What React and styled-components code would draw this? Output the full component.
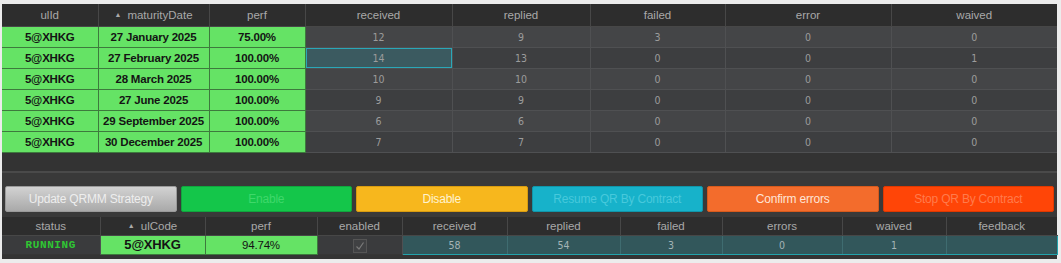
import styled, { createGlobalStyle } from "styled-components";

const GlobalStyle = createGlobalStyle`
  html, body {
    margin: 0;
    padding: 0;
    background: #ececec;
  }
  body {
    font-family: "Liberation Sans", Arial, sans-serif;
  }
`;

const Panel = styled.div`
  margin: 4px 4px 0 2px;
  width: 1055px;
  background: #363636;
  display: flex;
  flex-direction: column;
`;

const Grid = styled.table`
  width: 1055px;
  border-collapse: collapse;
  table-layout: fixed;
  white-space: nowrap;
`;

const Head = styled.th`
  height: ${(p) => p.$h}px;
  padding: 0;
  background: #2d2d2d;
  color: #a9a9a9;
  font-weight: 400;
  font-size: 11.5px;
  text-align: center;
  border-right: 1px solid #474747;
  border-bottom: 1px solid #474747;
  overflow: hidden;
  &:last-child {
    border-right: none;
  }
`;

const Arrow = styled.span`
  font-size: 7px;
  margin-right: 6px;
  vertical-align: 2px;
`;

const Cell = styled.td`
  height: ${(p) => p.$h}px;
  padding: 0;
  text-align: center;
  font-family: "DejaVu Sans Condensed", "Liberation Sans", sans-serif;
  font-size: 10.5px;
  color: #9c9c9c;
  background: ${(p) => (p.$odd ? "#444547" : "#3d3e40")};
  border-right: 1px solid #4f5052;
  border-bottom: 1px solid #4f5052;
  &:last-child {
    border-right: none;
  }
`;

const GreenCell = styled.td`
  height: ${(p) => p.$h}px;
  padding: 0;
  text-align: center;
  background: #65e365;
  color: #141414;
  font-weight: ${(p) => (p.$light ? 400 : 700)};
  font-size: ${(p) => (p.$size ? p.$size : 11.5)}px;
  letter-spacing: -0.2px;
  border-right: 1px solid #3d7a3d;
  border-bottom: 1px solid #3d7a3d;
  overflow: hidden;
`;

const SelectedCell = styled(Cell)`
  background: #3b5a60;
  box-shadow: inset 0 0 0 1px #2aa7b8;
`;

const Filler = styled.div`
  height: 18px;
  background: #333333;
  border-bottom: 2px solid #4a4a4a;
`;

const Toolbar = styled.div`
  display: flex;
  gap: 4px;
  padding: 13px 3px 5px 3px;
  background: #393939;
`;

const Button = styled.button`
  flex: 1;
  height: 26px;
  border: 1px solid ${(p) => p.$edge};
  border-radius: 2px;
  background: ${(p) => p.$bg};
  color: ${(p) => p.$fg};
  font-family: inherit;
  font-size: 12px;
  letter-spacing: -0.2px;
  padding: 0;
`;

const Status = styled.td`
  height: 17px;
  padding: 0;
  text-align: center;
  background: #3a3b3d;
  color: #2fc733;
  font-family: "Liberation Mono", "DejaVu Sans Mono", monospace;
  font-weight: 700;
  font-size: 11px;
  letter-spacing: 0.6px;
  border-right: 1px solid #4f5052;
`;

const TealCell = styled.td`
  height: 15px;
  padding: 0;
  text-align: center;
  font-family: "DejaVu Sans Condensed", "Liberation Sans", sans-serif;
  font-size: 10.5px;
  color: #a4b4b6;
  background: #32575b;
  border-top: 1px solid #23a3ac;
  border-bottom: 1px solid #23a3ac;
  border-right: 1px solid #3f6c70;
  &:first-of-type {
    border-left: 1px solid #23a3ac;
  }
  &:last-child {
    border-right: 1px solid #23a3ac;
  }
`;

const PlainCell = styled.td`
  height: 17px;
  padding: 0;
  text-align: center;
  background: #3a3b3d;
  border-right: 1px solid #4f5052;
`;

const Check = styled.span`
  display: inline-block;
  width: 12px;
  height: 12px;
  border: 1px solid #555;
  background: #404143;
  vertical-align: middle;
  svg {
    display: block;
  }
`;

const Bottom = styled.div`
  height: 4px;
  background: #343434;
`;

const topCols = [96, 111, 96, 147, 138, 135, 166, 166];
const botCols = [98, 105, 112, 85, 105, 113, 102, 120, 104, 111];

const rows = [
  ["27 January 2025", "75.00%", 12, 9, 3, 0, 0],
  ["27 February 2025", "100.00%", 14, 13, 0, 0, 1],
  ["28 March 2025", "100.00%", 10, 10, 0, 0, 0],
  ["27 June 2025", "100.00%", 9, 9, 0, 0, 0],
  ["29 September 2025", "100.00%", 6, 6, 0, 0, 0],
  ["30 December 2025", "100.00%", 7, 7, 0, 0, 0],
];

const buttons = [
  { label: "Update QRMM Strategy", bg: "linear-gradient(#d2d2d2, #a9a9a9)", fg: "#eeeeee", edge: "#9a9a9a" },
  { label: "Enable", bg: "#14c64a", fg: "#3fd86a", edge: "#10a63e" },
  { label: "Disable", bg: "#f7b71d", fg: "#fff3cf", edge: "#d99c10" },
  { label: "Resume QR By Contract", bg: "#17b2ca", fg: "#47c9dc", edge: "#1096aa" },
  { label: "Confirm errors", bg: "#f36c2c", fg: "#ffe4d6", edge: "#d85a1c" },
  { label: "Stop QR By Contract", bg: "#ff4507", fg: "#ff7b4c", edge: "#e03800" },
];

const App = () => {
  return (
    <>
      <GlobalStyle />
      <Panel>
        <Grid>
          <colgroup>
            {topCols.map((w, i) => (
              <col key={i} style={{ width: w }} />
            ))}
          </colgroup>
          <thead>
            <tr>
              <Head $h={22}>ulId</Head>
              <Head $h={22}>
                <Arrow>▲</Arrow>maturityDate
              </Head>
              <Head $h={22}>perf</Head>
              <Head $h={22}>received</Head>
              <Head $h={22}>replied</Head>
              <Head $h={22}>failed</Head>
              <Head $h={22}>error</Head>
              <Head $h={22}>waived</Head>
            </tr>
          </thead>
          <tbody>
            {rows.map((r, i) => (
              <tr key={i}>
                <GreenCell $h={20}>5@XHKG</GreenCell>
                <GreenCell $h={20}>{r[0]}</GreenCell>
                <GreenCell $h={20}>{r[1]}</GreenCell>
                {i === 1 ? (
                  <SelectedCell $h={20}>{r[2]}</SelectedCell>
                ) : (
                  <Cell $h={20} $odd={i % 2 === 0}>
                    {r[2]}
                  </Cell>
                )}
                {r.slice(3).map((v, j) => (
                  <Cell key={j} $h={20} $odd={i % 2 === 0}>
                    {v}
                  </Cell>
                ))}
              </tr>
            ))}
          </tbody>
        </Grid>
        <Filler />
        <Toolbar>
          {buttons.map((b) => (
            <Button key={b.label} $bg={b.bg} $fg={b.fg} $edge={b.edge}>
              {b.label}
            </Button>
          ))}
        </Toolbar>
        <Grid>
          <colgroup>
            {botCols.map((w, i) => (
              <col key={i} style={{ width: w }} />
            ))}
          </colgroup>
          <thead>
            <tr>
              <Head $h={18}>status</Head>
              <Head $h={18}>
                <Arrow>▲</Arrow>ulCode
              </Head>
              <Head $h={18}>perf</Head>
              <Head $h={18}>enabled</Head>
              <Head $h={18}>received</Head>
              <Head $h={18}>replied</Head>
              <Head $h={18}>failed</Head>
              <Head $h={18}>errors</Head>
              <Head $h={18}>waived</Head>
              <Head $h={18}>feedback</Head>
            </tr>
          </thead>
          <tbody>
            <tr>
              <Status>RUNNING</Status>
              <GreenCell $h={17} $size={13}>
                5@XHKG
              </GreenCell>
              <GreenCell $h={17} $light $size={11.5}>
                94.74%
              </GreenCell>
              <PlainCell>
                <Check>
                  <svg width="12" height="12" viewBox="0 0 12 12">
                    <path d="M2.5 6.5 L5 9 L9.5 2.5" fill="none" stroke="#7a7a7a" strokeWidth="1.2" />
                  </svg>
                </Check>
              </PlainCell>
              <TealCell>58</TealCell>
              <TealCell>54</TealCell>
              <TealCell>3</TealCell>
              <TealCell>0</TealCell>
              <TealCell>1</TealCell>
              <TealCell></TealCell>
            </tr>
          </tbody>
        </Grid>
        <Bottom />
      </Panel>
    </>
  );
};

export default App;
